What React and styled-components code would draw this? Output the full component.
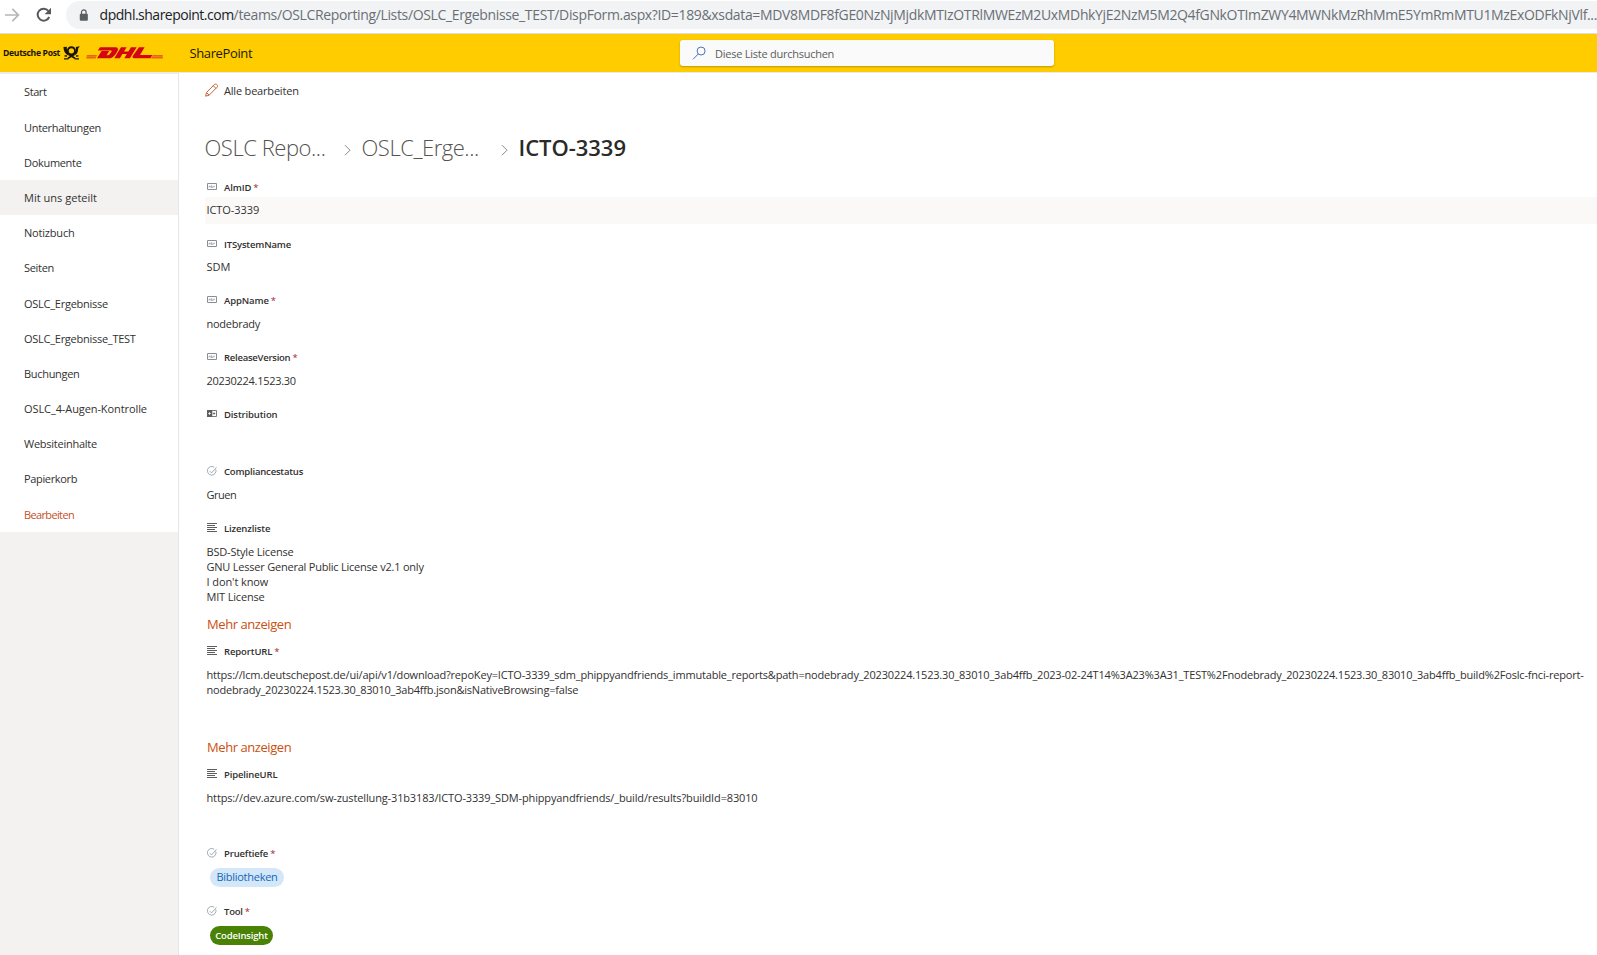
import React from "react";
import styled, { createGlobalStyle } from "styled-components";

const GlobalStyle = createGlobalStyle`
  * { box-sizing: border-box; }
  body {
    margin: 0;
    overflow: hidden;
    background: #fff;
    color: #323130;
    font-family: "Open Sans", "Noto Sans", sans-serif;
    font-size: 11px;
  }
`;

const Page = styled.div`
  height: 955px;
  width: 100%;
  display: flex;
  flex-direction: column;
  overflow: hidden;
`;

const Text = styled.span`
  white-space: pre;
  letter-spacing: ${(p) => p.$ls || 0}px;
`;

/* Browser bar */
const BrowserBar = styled.div`
  flex: none;
  height: 34px;
  padding-top: 1px;
  display: flex;
  align-items: flex-start;
  border-bottom: 1px solid #dcdddf;
`;
const NavIcons = styled.div`
  width: 66px;
  height: 28px;
  padding-left: 4px;
  display: flex;
  align-items: center;
  gap: 16px;
`;
const AddressField = styled.div`
  flex: 1;
  height: 28px;
  padding-left: 13px;
  display: flex;
  align-items: center;
  background: #f1f3f4;
  border-radius: 14px 0 0 14px;
  overflow: hidden;
`;
const Address = styled.div`
  margin-left: 11px;
  font-size: 14px;
  line-height: 28px;
  color: #6b6f74;
  white-space: pre;
`;
const Host = styled(Text)`
  color: #202124;
`;

/* Suite header */
const Header = styled.header`
  flex: none;
  height: 39px;
  display: grid;
  grid-template-columns: 189px 491px 374px;
  align-items: center;
  background: #ffcc00;
  border-bottom: 1px solid #eaeaea;
`;
const Brand = styled.div`
  display: flex;
  align-items: center;
  padding-left: 3px;
`;
const PostName = styled(Text)`
  width: 60px;
  font-size: 8.6px;
  line-height: 16px;
  font-weight: 700;
  color: #1a1400;
`;
const DhlLogoSlot = styled.div`
  display: flex;
  margin-left: 6px;
`;
const ProductName = styled(Text)`
  padding-left: 0.5px;
  font-size: 13px;
  color: #201a00;
`;
const SearchBox = styled.div`
  height: 26px;
  display: flex;
  align-items: center;
  padding-left: 12px;
  gap: 8px;
  background: #fafafa;
  border-radius: 3px;
  box-shadow: 0 1px 2px rgba(0, 0, 0, 0.25);
  color: #5c5c5c;
`;

/* Body */
const Body = styled.div`
  flex: 1;
  min-height: 0;
  display: grid;
  grid-template-columns: 179px 1fr;
`;
const Sidebar = styled.aside`
  background: #f3f2f1;
  border-right: 1px solid #e7e6e5;
`;
const NavList = styled.nav`
  height: 459px;
  padding-top: 0.33px;
  border-top: 1px solid #eaeaea;
  background: #fff;
`;
const NavItem = styled.div`
  height: 35.19px;
  padding-left: 24px;
  display: flex;
  align-items: center;
  background: ${(p) => (p.$active ? "#f3f2f1" : "transparent")};
  font-weight: ${(p) => (p.$active ? 530 : 400)};
  color: ${(p) => (p.$accent ? "#c8501e" : "#323130")};
`;
const Content = styled.main`
  padding-left: 26px;
  overflow: hidden;
`;
const CommandBar = styled.div`
  height: 36px;
  padding-bottom: 2px;
  display: flex;
  align-items: center;
  gap: 6px;
`;
const Crumbs = styled.div`
  height: 71px;
  padding-top: 4px;
  display: grid;
  grid-template-columns: 157px 157px auto;
  align-items: center;
`;
const Crumb = styled.div`
  display: flex;
  align-items: center;
  justify-content: space-between;
  padding-right: 11px;
  margin-left: -0.5px;
  font-size: 22px;
  line-height: 32px;
  font-weight: ${(p) => (p.$current ? 600 : 300)};
  color: ${(p) => (p.$current ? "#2b2a29" : "#55534f")};
  svg { margin-top: 6px; }
`;

/* Form */
const Field = styled.section`
  height: ${(p) => p.$h}px;
`;
const LabelRow = styled.div`
  height: 17px;
  padding: 0 0 2px 2px;
  display: flex;
  align-items: center;
  font-size: 9.5px;
  font-weight: 540;
  line-height: 15px;
`;
const IconSlot = styled.span`
  width: 17px;
  height: 15px;
  padding-bottom: ${(p) => (p.$kind === "check" ? 1 : 2)}px;
  display: flex;
  align-items: center;
`;
const Required = styled.span`
  margin-left: 2px;
  font-weight: 400;
  color: #a4262c;
`;
const Value = styled.div`
  min-height: 27px;
  padding: ${(p) => (p.$raised ? 5 : 6)}px 0 6px 1.5px;
  display: flex;
  flex-direction: column;
  line-height: 15px;
  border-radius: 2px 0 0 2px;
  background: ${(p) => (p.$hover ? "#faf9f8" : "transparent")};
`;
const LongValue = styled(Value)`
  height: 76px;
`;
const MoreLink = styled.div`
  padding-left: 2px;
  font-size: 13px;
  line-height: 20px;
  color: #ca5010;
`;
const Pill = styled.span`
  width: ${(p) => p.$w}px;
  height: 19px;
  margin: 5px 0 0 5px;
  padding-bottom: ${(p) => (p.$strong ? 1 : 2)}px;
  display: flex;
  align-items: center;
  justify-content: center;
  border-radius: 10px;
  font-size: ${(p) => (p.$strong ? 9.5 : 11)}px;
  font-weight: ${(p) => (p.$strong ? 540 : 400)};
  color: ${(p) => (p.$strong ? "#fff" : "#1166bb")};
  background: ${(p) => (p.$strong ? "#498205" : "#d3e7f8")};
`;

const ForwardIcon = () => (
  <svg width="16" height="16" viewBox="0 0 16 16" fill="none" stroke="#b4b6b9" strokeWidth="1.7">
    <path d="M1 8h13M8.3 1.8 14.4 8l-6.1 6.2" />
  </svg>
);
const ReloadIcon = () => (
  <svg width="16" height="16" viewBox="0 0 16 16">
    <path d="M13.2 10A6 6 0 1 1 12.4 4" fill="none" stroke="#55585c" strokeWidth="2" />
    <path d="M15 0.8v6.4H8.6z" fill="#55585c" />
  </svg>
);
const LockIcon = () => (
  <svg width="10" height="13" viewBox="0 0 10 13">
    <rect x="0.8" y="4.6" width="8.4" height="7.4" rx="1" fill="#5a5d61" />
    <path d="M2.6 5V3.1a2.4 2.4 0 0 1 4.8 0V5" fill="none" stroke="#5a5d61" strokeWidth="1.3" />
  </svg>
);
const HornIcon = () => (
  <svg width="17" height="14" viewBox="0 0 17 14" fill="none" stroke="#1a1400">
    <circle cx="8.4" cy="4.8" r="3.6" strokeWidth="1.9" />
    <path d="M.4 1 3.8.8c-.2 2.6.5 5.1 2.3 7L4.6 9.2C2 7.8.5 4.5.4 1Z" fill="#1a1400" stroke="none" />
    <path d="M16.8.2 12.8.9c.6 2.6-.3 5-2.1 6.9l1.5 1.3c2.6-1.9 3-4.7 2.9-6.7Z" fill="#1a1400" stroke="none" />
    <path d="M5.4 8.2 12 12.3M11.6 8.2 5 12.3" strokeWidth="1.7" />
    <path d="M1.4 9.8 4 10M15.5 9.8 13 10M1 12.9h4.4M11.6 12.9H16" strokeWidth="1.3" />
  </svg>
);
const DhlLogo = () => (
  <svg width="78" height="14" viewBox="0 0 78 14">
    <g fill="#e8641b">
      <path d="M1 9h10.2l-.8 1.6H.5zM.5 10.8h9.8l-.8 1.6H.3z" />
      <path d="M66.8 9h10v1.6H66zM65.8 10.8h11v1.6H65z" />
    </g>
    <g fill="#d40511" fillRule="evenodd">
      <path d="M14 1.2h14.8c3.5 0 3.8 2 2.4 4.3-2.2 3.8-4.2 6.8-8.2 6.8H11L15.6 5h7.6l-2.6 4.2h1.3c1.7 0 2.7-2 3.5-3.4.5-.9.3-1.3-.9-1.3H11.8z" />
      <path d="M35 1.2h5.6L38 5.6h4.4L45 1.2h5.6l-6.7 11.1h-5.6l2.5-4.2h-4.4l-2.5 4.2h-5.6z" />
      <path d="M53 1.2h5.6L54 9h12.4l-2 3.3H48.2c-1.7 0-2.1-1.2-1.3-2.5z" />
    </g>
  </svg>
);
const SearchIcon = () => (
  <svg width="15" height="15" viewBox="0 0 15 15" fill="none" stroke="#4674c4" strokeWidth="1">
    <circle cx="9.1" cy="5" r="4" />
    <path d="M6.3 8 1 13.3" />
  </svg>
);
const PencilIcon = () => (
  <svg width="13" height="14" viewBox="0 0 13 14" fill="none" stroke="#c4653c" strokeWidth="1">
    <path d="M.6 13.2 1.5 9.5 9.4 1.5c1.5-1.4 4.2 1 2.7 2.7L4.1 12.2zM8.2 2.7 10.9 5.4M1.5 9.5l2.6 2.7" />
  </svg>
);
const ChevronIcon = () => (
  <svg width="7" height="12" viewBox="0 0 7 12" fill="none" stroke="#8a8886" strokeWidth="1">
    <path d="M1 1.2 6 6.2 1 11.2" />
  </svg>
);
const fieldIcons = {
  text: (
    <svg width="10" height="7" viewBox="0 0 10 7" fill="none" stroke="#8a8f96">
      <path d="M.5.5h9v6h-9z" />
      <path d="M2 4.4V3.2h1.3v1.3M4.4 2.2v2.3h1.2V3.3M6.7 4.4V3.2H8" strokeWidth=".7" />
    </svg>
  ),
  choice: (
    <svg width="10" height="7" viewBox="0 0 10 7" fill="none">
      <path d="M0 0h5.3v7H0z" fill="#605e5c" />
      <path d="M5 .5h4.5v6H5" stroke="#737982" />
      <path d="M1.2 3.5h2.7M2.5 2.2v2.6" stroke="#fff" strokeWidth=".8" />
      <path d="M5.8 3.5h2.5M7 2.3v2.4" stroke="#605e5c" strokeWidth=".8" />
    </svg>
  ),
  check: (
    <svg width="10" height="10" viewBox="0 0 10 10" fill="none" stroke="#8797a1" strokeWidth=".8">
      <path d="M8.8 3.5A4.3 4.3 0 1 1 7.2 1.3" />
      <path d="m2.8 5.2 1.7 1.7L9.5 1.4" />
    </svg>
  ),
  lines: (
    <svg width="10" height="9" viewBox="0 0 10 9" stroke="#605e5c">
      <path d="M0 .5h10M0 2.5h8M0 4.5h10M0 6.5h8M0 8.5h10" />
    </svg>
  ),
};

const navItems = [
  ["Start", -0.4],
  ["Unterhaltungen", -0.31],
  ["Dokumente", -0.31],
  ["Mit uns geteilt", 0.02],
  ["Notizbuch", -0.19],
  ["Seiten", -0.31],
  ["OSLC_Ergebnisse", -0.25],
  ["OSLC_Ergebnisse_TEST", -0.26],
  ["Buchungen", -0.31],
  ["OSLC_4-Augen-Kontrolle", -0.09],
  ["Websiteinhalte", -0.25],
  ["Papierkorb", -0.35],
  ["Bearbeiten", -0.64],
];

const fields = [
  { icon: "text", label: "AlmID", ls: -0.12, req: true, h: 57, hover: true, raised: true, lines: [["ICTO-3339", -0.08]] },
  { icon: "text", label: "ITSystemName", ls: -0.17, h: 56, raised: true, lines: [["SDM", 0]] },
  { icon: "text", label: "AppName", ls: -0.12, req: true, h: 57, lines: [["nodebrady", -0.27]] },
  { icon: "text", label: "ReleaseVersion", ls: -0.25, req: true, h: 57, lines: [["20230224.1523.30", -0.28]] },
  { icon: "choice", label: "Distribution", ls: -0.12, h: 57, lines: [] },
  { icon: "check", label: "Compliancestatus", ls: -0.19, h: 57, lines: [["Gruen", -0.5]] },
  {
    icon: "lines", label: "Lizenzliste", ls: -0.12, h: 123, more: true,
    lines: [
      ["BSD-Style License", -0.18],
      ["GNU Lesser General Public License v2.1 only", -0.22],
      ["I don't know", -0.09],
      ["MIT License", -0.18],
    ],
  },
  {
    icon: "lines", label: "ReportURL", ls: -0.12, req: true, h: 123, more: true,
    lines: [
      ["https://lcm.deutschepost.de/ui/api/v1/download?repoKey=ICTO-3339_sdm_phippyandfriends_immutable_reports&path=nodebrady_20230224.1523.30_83010_3ab4ffb_2023-02-24T14%3A23%3A31_TEST%2Fnodebrady_20230224.1523.30_83010_3ab4ffb_build%2Foslc-fnci-report-", -0.182],
      ["nodebrady_20230224.1523.30_83010_3ab4ffb.json&isNativeBrowsing=false", -0.21],
    ],
  },
  {
    icon: "lines", label: "PipelineURL", ls: -0.14, h: 79, long: true,
    lines: [["https://dev.azure.com/sw-zustellung-31b3183/ICTO-3339_SDM-phippyandfriends/_build/results?buildId=83010", -0.142]],
  },
  { icon: "check", label: "Prueftiefe", ls: -0.15, req: true, h: 58, pill: ["Bibliotheken", -0.26, 74] },
  { icon: "check", label: "Tool", ls: -0.2, req: true, h: 50, pill: ["CodeInsight", -0.17, 63, true] },
];

function FormField({ f }) {
  const Box = f.more || f.long ? LongValue : Value;
  return (
    <Field $h={f.h}>
      <LabelRow>
        <IconSlot $kind={f.icon}>{fieldIcons[f.icon]}</IconSlot>
        <Text $ls={f.ls}>{f.label}</Text>
        {f.req && <Required>*</Required>}
      </LabelRow>
      {f.pill ? (
        <Pill $w={f.pill[2]} $strong={f.pill[3]}>
          <Text $ls={f.pill[1]}>{f.pill[0]}</Text>
        </Pill>
      ) : (
        <Box $hover={f.hover} $raised={f.raised}>
          {f.lines.map(([t, ls]) => (
            <Text key={t} $ls={ls}>{t}</Text>
          ))}
        </Box>
      )}
      {f.more && (
        <MoreLink>
          <Text $ls={-0.43}>Mehr anzeigen</Text>
        </MoreLink>
      )}
    </Field>
  );
}

export default function App() {
  return (
    <Page>
      <GlobalStyle />
      <BrowserBar>
        <NavIcons>
          <ForwardIcon />
          <ReloadIcon />
        </NavIcons>
        <AddressField>
          <LockIcon />
          <Address>
            <Host $ls={-0.5}>dpdhl.sharepoint.com</Host>
            <Text $ls={-0.352}>/teams/OSLCReporting/Lists/OSLC_Ergebnisse_TEST/DispForm.aspx?ID=189&amp;xsdata=MDV8MDF8fGE0NzNjMjdkMTIzOTRlMWEzM2UxMDhkYjE2NzM5M2Q4fGNkOTImZWY4MWNkMzRhMmE5YmRmMTU1MzExODFkNjVlf...</Text>
          </Address>
        </AddressField>
      </BrowserBar>
      <Header>
        <Brand>
          <PostName $ls={-0.32}>Deutsche Post</PostName>
          <HornIcon />
          <DhlLogoSlot>
            <DhlLogo />
          </DhlLogoSlot>
        </Brand>
        <ProductName $ls={-0.38}>SharePoint</ProductName>
        <SearchBox>
          <SearchIcon />
          <Text $ls={-0.25}>Diese Liste durchsuchen</Text>
        </SearchBox>
      </Header>
      <Body>
        <Sidebar>
          <NavList>
            {navItems.map(([t, ls], i) => (
              <NavItem key={t} $active={i === 3} $accent={i === 12}>
                <Text $ls={ls}>{t}</Text>
              </NavItem>
            ))}
          </NavList>
        </Sidebar>
        <Content>
          <CommandBar>
            <PencilIcon />
            <Text $ls={-0.19}>Alle bearbeiten</Text>
          </CommandBar>
          <Crumbs>
            <Crumb>
              <Text $ls={-0.45}>OSLC Repo...</Text>
              <ChevronIcon />
            </Crumb>
            <Crumb>
              <Text $ls={-0.46}>OSLC_Erge...</Text>
              <ChevronIcon />
            </Crumb>
            <Crumb $current>
              <Text $ls={-0.04}>ICTO-3339</Text>
            </Crumb>
          </Crumbs>
          {fields.map((f) => (
            <FormField key={f.label} f={f} />
          ))}
        </Content>
      </Body>
    </Page>
  );
}
